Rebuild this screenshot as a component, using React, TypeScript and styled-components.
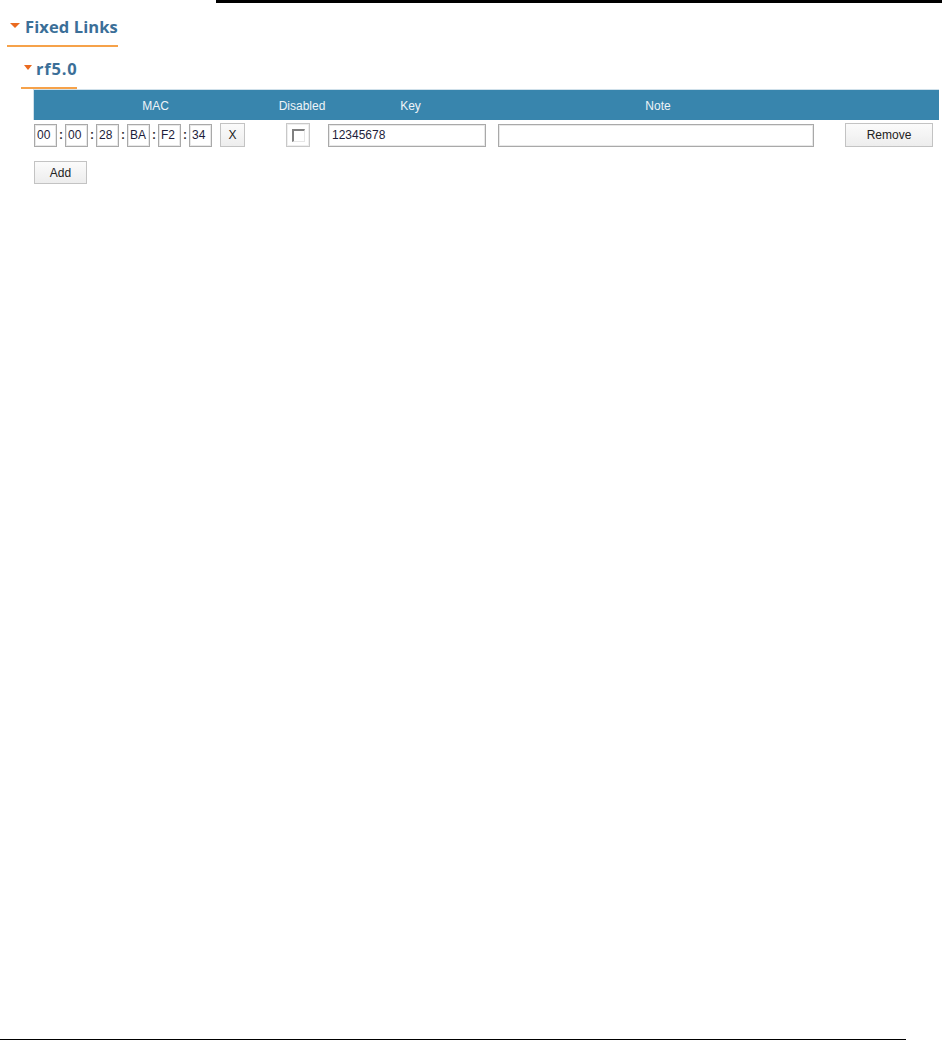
import React from "react";
import styled, { createGlobalStyle } from "styled-components";

const Global = createGlobalStyle`
  html, body { margin: 0; padding: 0; background: #fff; overflow: hidden; }
  body { font-family: "Liberation Sans", Arial, sans-serif; }
`;

const Page = styled.div`
  display: flex;
  flex-direction: column;
  align-items: flex-start;
  height: 1041px;
  position: relative;
`;

const TopRule = styled.div`
  margin-left: 216px;
  width: 726px;
  height: 3px;
  background: #000;
`;

const BottomRule = styled.div`
  margin-top: auto;
  margin-bottom: 1px;
  width: 906px;
  height: 1px;
  background: #000;
`;

const Heading = styled.div<{ $ml: number; $mt: number; $ls: number }>`
  display: inline-flex;
  align-items: center;
  margin-left: ${(p) => p.$ml}px;
  margin-top: ${(p) => p.$mt}px;
  padding: 0 0 7px 3px;
  height: 22px;
  box-sizing: content-box;
  border-bottom: 2px solid #f6a24a;
  font-family: "Open Sans", "Noto Sans", sans-serif;
  font-weight: 700;
  font-size: 16.5px;
  letter-spacing: ${(p) => p.$ls}px;
  line-height: 22px;
  color: #3b6f98;
`;

const Caret = styled.span<{ $w: number; $gap: number }>`
  display: inline-block;
  width: 0;
  height: 0;
  border-left: ${(p) => p.$w / 2}px solid transparent;
  border-right: ${(p) => p.$w / 2}px solid transparent;
  border-top: 5px solid #ea6a1f;
  margin-right: ${(p) => p.$gap}px;
  margin-top: -3px;
`;

const Table = styled.div`
  margin-left: 33px;
  width: 906px;
  font-size: 12px;
  color: #222;
`;

const cols = "243px 50px 167px 328px 118px";

const HeaderRow = styled.div`
  display: grid;
  grid-template-columns: ${cols};
  height: 31px;
  background: #3885ad;
  border-top: 1px solid #cfe0ea;
  border-left: 1px solid #cfe0ea;
  box-sizing: border-box;
  align-items: center;
`;

const HeadCell = styled.div`
  text-align: center;
  color: #eef4f8;
  font-size: 12px;
  white-space: nowrap;
  padding-top: 1px;
`;

const BodyRow = styled.div`
  display: grid;
  grid-template-columns: ${cols};
  margin-top: 3px;
  height: 24px;
  align-items: center;
`;

const Cell = styled.div<{ $pl?: number; $pr?: number; $end?: boolean }>`
  display: flex;
  align-items: center;
  justify-content: ${(p) => (p.$end ? "flex-end" : "flex-start")};
  padding-left: ${(p) => p.$pl ?? 0}px;
  padding-right: ${(p) => p.$pr ?? 0}px;
`;

const TextBox = styled.div<{ $w: number }>`
  width: ${(p) => p.$w}px;
  height: 23px;
  box-sizing: border-box;
  border: 1px solid #a9a9a9;
  box-shadow: inset 0 0 0 1px #e8e8e8;
  padding: 0 3px;
  display: flex;
  align-items: center;
  font-size: 12px;
  color: #1d1d3a;
  background: #fff;
  white-space: nowrap;
  overflow: hidden;
`;

const MacBox = styled(TextBox)`
  padding: 0 2px;
`;

const Colon = styled.span`
  width: 8px;
  text-align: center;
  font-weight: 700;
  font-size: 12px;
  color: #333;
`;

const Button = styled.div<{ $w: number; $ml?: number }>`
  width: ${(p) => p.$w}px;
  height: 24px;
  margin-left: ${(p) => p.$ml ?? 0}px;
  box-sizing: border-box;
  border: 1px solid #c3c3c3;
  background: linear-gradient(#fbfbfb, #ededed);
  display: flex;
  align-items: center;
  justify-content: center;
  font-size: 12px;
  color: #222;
`;

const AddButton = styled(Button)`
  margin-top: 14px;
  height: 23px;
  margin-left: 1px;
`;

const CheckWrap = styled.div`
  width: 24px;
  height: 24px;
  box-sizing: border-box;
  border: 1px solid #c8c8c8;
  box-shadow: inset 0 0 0 1px #eeeeee;
  display: flex;
  align-items: center;
  justify-content: center;
  background: #fff;
`;

const CheckBox = styled.div`
  width: 13px;
  height: 13px;
  box-sizing: border-box;
  border-top: 2px solid #808080;
  border-left: 2px solid #808080;
  border-right: 1px solid #e6e6e6;
  border-bottom: 1px solid #e6e6e6;
  background: #fff;
`;

const mac = ["00", "00", "28", "BA", "F2", "34"];

export default function App() {
  return (
    <>
      <Global />
      <Page>
        <TopRule />
        <Heading $ml={7} $mt={13} $ls={0.1}>
          <Caret $w={10} $gap={5} />
          Fixed Links
        </Heading>
        <Heading $ml={21} $mt={11} $ls={0.8}>
          <Caret $w={9} $gap={4} />
          rf5.0
        </Heading>
        <Table>
          <HeaderRow>
            <HeadCell>MAC</HeadCell>
            <HeadCell>Disabled</HeadCell>
            <HeadCell>Key</HeadCell>
            <HeadCell>Note</HeadCell>
            <HeadCell />
          </HeaderRow>
          <BodyRow>
            <Cell $pl={1}>
              {mac.map((m, i) => (
                <React.Fragment key={i}>
                  {i > 0 && <Colon>:</Colon>}
                  <MacBox $w={23}>{m}</MacBox>
                </React.Fragment>
              ))}
              <Button $w={25} $ml={8}>X</Button>
            </Cell>
            <Cell $pl={10}>
              <CheckWrap>
                <CheckBox />
              </CheckWrap>
            </Cell>
            <Cell $pl={2}>
              <TextBox $w={158}>12345678</TextBox>
            </Cell>
            <Cell $pl={5}>
              <TextBox $w={316} />
            </Cell>
            <Cell $end $pr={6}>
              <Button $w={88}>Remove</Button>
            </Cell>
          </BodyRow>
          <AddButton $w={53}>Add</AddButton>
        </Table>
        <BottomRule />
      </Page>
    </>
  );
}
